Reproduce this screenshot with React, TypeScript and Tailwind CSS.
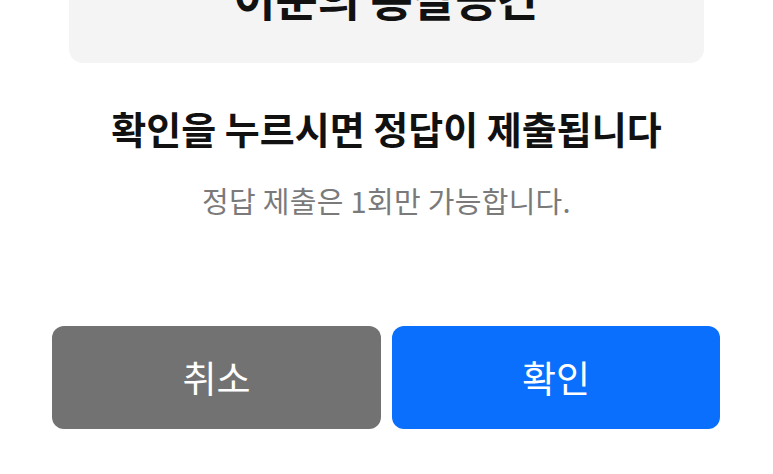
import React from "react";

const font = { fontFamily: '"Noto Sans CJK KR", "Noto Sans", sans-serif' };

export default function App() {
  return (
    <div className="w-[773px] h-[474px] bg-white overflow-hidden flex flex-col" style={font}>
      <div className="mx-[69px] w-[635px] h-[63px] bg-[#f4f4f4] rounded-b-[14px] overflow-hidden flex justify-center">
        <p className="mt-[-27px] text-[46px] leading-[46px] font-bold text-[#111] whitespace-nowrap">
          이준의 통찰공간
        </p>
      </div>
      <h1 className="mt-[41px] text-center text-[38px] leading-[48px] font-bold text-[#111] whitespace-nowrap">
        확인을 누르시면 정답이 제출됩니다
      </h1>
      <p className="mt-[30px] text-center text-[29px] leading-[36px] text-[#7a7a7a] tracking-[0.3px] whitespace-nowrap">
        정답 제출은 1회만 가능합니다.
      </p>
      <div className="mt-[108px] ml-[52px] flex gap-[11px]">
        <button className="w-[329px] h-[103px] rounded-[12px] bg-[#727272] text-white text-[37px] flex items-center justify-center">
          취소
        </button>
        <button className="w-[328px] h-[103px] rounded-[12px] bg-[#0a6ffc] text-white text-[37px] flex items-center justify-center">
          확인
        </button>
      </div>
    </div>
  );
}
